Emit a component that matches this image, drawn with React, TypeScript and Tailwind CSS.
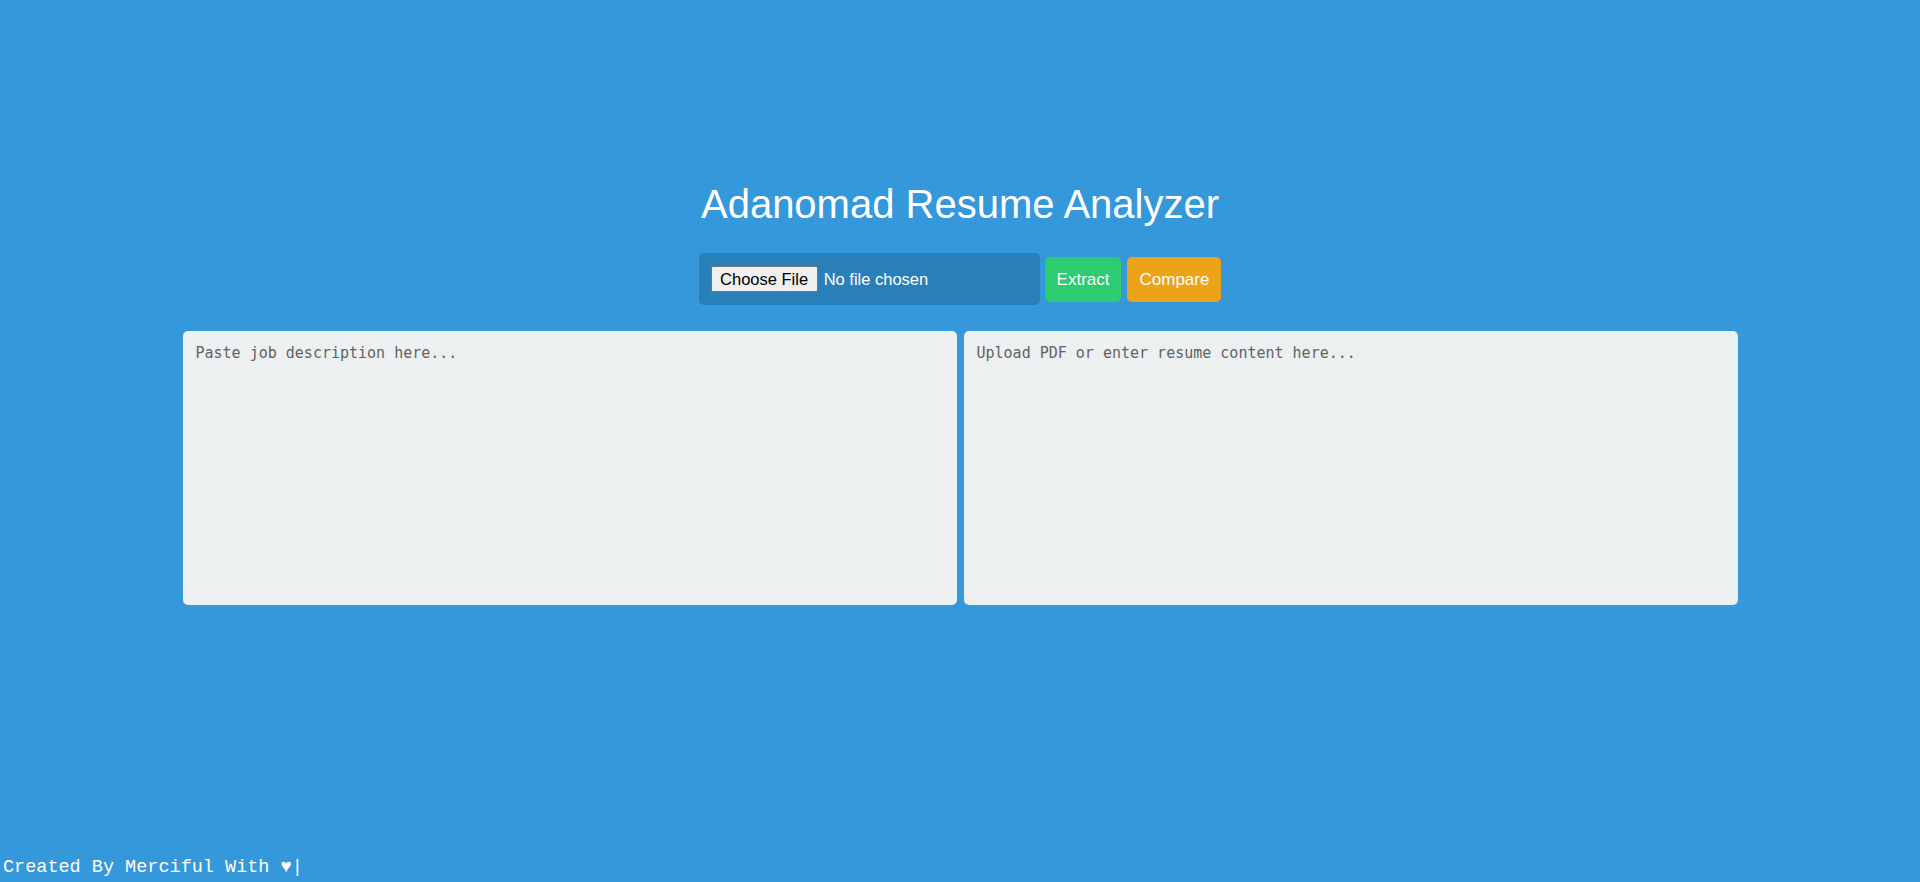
import React, { useState } from 'react';

const App: React.FC = () => {
    const [jobText, setJobText] = useState('');
    const [resumeText, setResumeText] = useState('');

    return (
        <div className="min-h-screen h-[882px] bg-[#3498db] flex flex-col font-['Liberation_Sans',Arial,sans-serif] overflow-hidden">
            {/* Header + controls */}
            <div className="flex flex-col items-center pt-[181px]">
                <h1 className="text-[40px] leading-[46px] text-white font-normal">Adanomad Resume Analyzer</h1>

                <div className="flex items-center mt-[26px]">
                    <div className="w-[341px] h-[52px] bg-[#2980b9] rounded-[5px] flex items-center pl-[12px]">
                        <input
                            type="file"
                            accept="application/pdf"
                            className="text-white text-[16.5px] w-[320px] file:mr-[6px] file:bg-[#efefef] file:text-black file:border file:border-[#767676] file:rounded-[2px] file:px-[8.5px] file:h-[26px] file:text-[16.5px]"
                        />
                    </div>
                    <button className="h-[45px] px-[12px] pt-[1px] ml-[5px] rounded-[5px] bg-[#2ecc71] text-white text-[17px]">Extract</button>
                    <button className="h-[45px] px-[12px] pt-[1px] ml-[6px] rounded-[5px] bg-[#eba419] text-white text-[17px]">Compare</button>
                </div>
            </div>

            {/* Text areas */}
            <div className="flex justify-center gap-[7px] mt-[26px]">
                <textarea
                    value={jobText}
                    onChange={e => setJobText(e.target.value)}
                    placeholder="Paste job description here..."
                    className="w-[774px] h-[274px] bg-[#ecf0f1] rounded-[5px] px-[13px] pt-[11px] resize-none outline-none font-['DejaVu_Sans_Mono',monospace] text-[15px] text-[#333] placeholder:text-[#626262]"
                />
                <textarea
                    value={resumeText}
                    onChange={e => setResumeText(e.target.value)}
                    placeholder="Upload PDF or enter resume content here..."
                    className="w-[774px] h-[274px] bg-[#ecf0f1] rounded-[5px] px-[13px] pt-[11px] resize-none outline-none font-['DejaVu_Sans_Mono',monospace] text-[15px] text-[#333] placeholder:text-[#626262]"
                />
            </div>

            {/* Footer */}
            <div className="mt-auto pl-[3px] pb-[4px] text-white text-[18.5px] leading-[20px] font-['Liberation_Mono','Courier_New',monospace]">
                Created By Merciful With ♥|
            </div>
        </div>
    );
};

export default App;
